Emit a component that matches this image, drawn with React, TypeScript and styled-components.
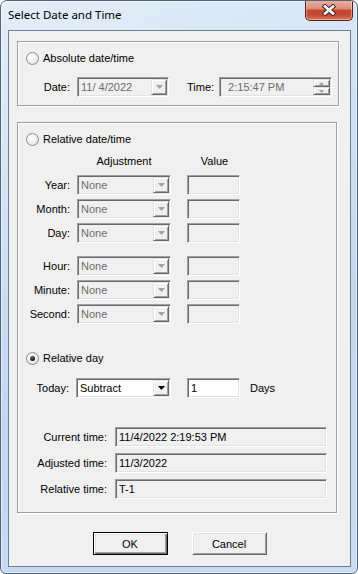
import React from 'react';
import styled, { createGlobalStyle, css } from 'styled-components';

const GlobalStyle = createGlobalStyle`
  html, body {
    margin: 0;
    padding: 0;
    background: #ffffff;
  }
  body {
    font-family: "Liberation Sans", Arial, sans-serif;
    font-size: 11px;
    color: #000000;
  }
  * {
    box-sizing: border-box;
  }
`;

const sunken = css`
  border: 1px solid;
  border-color: #a0a0a0 #ffffff #ffffff #a0a0a0;
  box-shadow: inset 1px 1px 0 #696969, inset -1px -1px 0 #e3e3e3;
  padding: 1px;
`;

const raised = css`
  border: 1px solid;
  border-color: #e3e3e3 #696969 #696969 #e3e3e3;
  box-shadow: inset 1px 1px 0 #ffffff, inset -1px -1px 0 #a0a0a0;
  background: #f0f0f0;
`;

const Window = styled.div`
  width: 358px;
  height: 574px;
  display: flex;
  flex-direction: column;
  border: 1px solid #52647a;
  border-radius: 7px 7px 6px 6px;
  background: linear-gradient(160deg, #e4eef9 0%, #cfe0f3 35%, #c2d7ee 60%, #c9dcf1 100%);
  box-shadow: inset 0 0 0 1px rgba(255, 255, 255, 0.55);
  overflow: hidden;
`;

const TitleBar = styled.div`
  height: 29px;
  display: flex;
  align-items: flex-start;
  padding-left: 7px;
`;

const Title = styled.div`
  font-family: "Noto Sans", "Liberation Sans", sans-serif;
  font-size: 11.5px;
  line-height: 28px;
  color: #000000;
`;

const CloseButton = styled.div`
  margin-left: auto;
  margin-right: 4px;
  margin-top: -1px;
  width: 48px;
  height: 21px;
  display: flex;
  align-items: center;
  justify-content: center;
  border: 1px solid #5a2219;
  border-top: none;
  border-radius: 0 0 5px 5px;
  background: linear-gradient(
    to bottom,
    #eab2a4 0%,
    #dc8c77 45%,
    #c4472f 50%,
    #c24a33 75%,
    #dd7a5e 100%
  );
  box-shadow: inset 0 0 0 1px rgba(255, 255, 255, 0.35);
`;

const Client = styled.div`
  flex: 1;
  margin: 0 6px 6px 7px;
  border: 1px solid #6f7f92;
  background: #f0f0f0;
  display: flex;
  flex-direction: column;
  padding: 10px 0 0 8px;
`;

const Group = styled.div<{ $width: number; $height: number; $gap?: number }>`
  width: ${p => p.$width}px;
  height: ${p => p.$height}px;
  margin-top: ${p => p.$gap ?? 0}px;
  border: 1px solid #a0a0a0;
  box-shadow: inset 1px 1px 0 #ffffff, 1px 1px 0 #ffffff;
  padding-top: 10px;
  display: flex;
  flex-direction: column;
`;

const RadioRow = styled.div<{ $gap?: number }>`
  display: flex;
  align-items: center;
  height: 13px;
  padding-left: 8px;
  margin-top: ${p => p.$gap ?? 0}px;
`;

const RadioCircle = styled.div<{ $checked?: boolean }>`
  width: 13px;
  height: 13px;
  border-radius: 50%;
  border: 1px solid #8b8b8b;
  background: radial-gradient(circle at 40% 35%, #ffffff 0%, #f2f2f2 45%, #d4d4d4 100%);
  display: flex;
  align-items: center;
  justify-content: center;
  &::after {
    content: '';
    display: ${p => (p.$checked ? 'block' : 'none')};
    width: 5px;
    height: 5px;
    border-radius: 50%;
    background: radial-gradient(circle at 40% 35%, #6a6a6a 0%, #111111 70%);
  }
`;

const RadioText = styled.span`
  margin-left: 4px;
  line-height: 13px;
`;

const Row = styled.div<{ $gap?: number }>`
  display: flex;
  align-items: center;
  height: 20px;
  margin-top: ${p => p.$gap ?? 0}px;
`;

const Label = styled.div<{ $width: number }>`
  width: ${p => p.$width}px;
  text-align: right;
  margin-right: 7px;
  white-space: nowrap;
`;

const InlineLabel = styled.div<{ $left: number; $right?: number }>`
  margin-left: ${p => p.$left}px;
  margin-right: ${p => p.$right ?? 0}px;
  white-space: nowrap;
`;

const Combo = styled.div<{ $width: number; $enabled?: boolean }>`
  ${sunken};
  width: ${p => p.$width}px;
  height: 20px;
  display: flex;
  align-items: center;
  background: ${p => (p.$enabled ? '#ffffff' : '#f0f0f0')};
  color: ${p => (p.$enabled ? '#000000' : '#6d6d6d')};
`;

const ComboText = styled.div`
  flex: 1;
  padding-left: 2px;
  white-space: nowrap;
`;

const DropButton = styled.div`
  ${raised};
  width: 16px;
  height: 16px;
  display: flex;
  align-items: center;
  justify-content: center;
`;

const SpinStack = styled.div`
  display: flex;
  flex-direction: column;
  width: 17px;
  height: 16px;
`;

const SpinButton = styled.div`
  ${raised};
  flex: 1;
  display: flex;
  align-items: center;
  justify-content: center;
`;

const Field = styled.div<{ $width: number; $enabled?: boolean; $left?: number }>`
  ${sunken};
  width: ${p => p.$width}px;
  height: 20px;
  margin-left: ${p => p.$left ?? 0}px;
  display: flex;
  align-items: center;
  padding-left: 3px;
  background: ${p => (p.$enabled ? '#ffffff' : '#f0f0f0')};
  white-space: nowrap;
`;

const HeaderRow = styled.div`
  display: flex;
  height: 13px;
  line-height: 13px;
  margin-top: 9px;
`;

const HeaderCell = styled.div<{ $left: number; $width: number }>`
  margin-left: ${p => p.$left}px;
  width: ${p => p.$width}px;
  text-align: center;
`;

const ButtonBar = styled.div`
  display: flex;
  justify-content: center;
  gap: 24px;
  margin-top: 19px;
  margin-left: -8px;
`;

const PushButton = styled.div<{ $default?: boolean }>`
  width: 75px;
  height: 23px;
  display: flex;
  align-items: center;
  justify-content: center;
  background: #f0f0f0;
  ${p =>
    p.$default
      ? css`
          border: 1px solid #000000;
          box-shadow: inset 1px 1px 0 #ffffff, inset -1px -1px 0 #696969,
            inset -2px -2px 0 #a0a0a0, inset 2px 2px 0 #e3e3e3;
        `
      : css`
          border: 1px solid;
          border-color: #ffffff #696969 #696969 #ffffff;
          box-shadow: inset 1px 1px 0 #e3e3e3, inset -1px -1px 0 #a0a0a0;
        `}
`;

const Arrow: React.FC<{ enabled?: boolean }> = ({ enabled }) => (
  <svg width="7" height="4" viewBox="0 0 7 4">
    <polygon points="0,0 7,0 3.5,4" fill={enabled ? '#000000' : '#a0a0a0'} />
  </svg>
);

const SpinArrow: React.FC<{ up?: boolean }> = ({ up }) => (
  <svg width="5" height="3" viewBox="0 0 5 3">
    <polygon points={up ? '0,3 5,3 2.5,0' : '0,0 5,0 2.5,3'} fill="#a0a0a0" />
  </svg>
);

const CloseGlyph: React.FC = () => (
  <svg width="14" height="12" viewBox="0 0 14 12">
    <path d="M3 2.5 L11 9.5 M11 2.5 L3 9.5" stroke="#4a2a26" strokeWidth="4.6" strokeLinecap="square" />
    <path d="M3 2.5 L11 9.5 M11 2.5 L3 9.5" stroke="#ffffff" strokeWidth="2.6" strokeLinecap="square" />
  </svg>
);

const adjustments = [
  { name: 'Year:', gap: 7 },
  { name: 'Month:', gap: 4 },
  { name: 'Day:', gap: 4 },
  { name: 'Hour:', gap: 13 },
  { name: 'Minute:', gap: 4 },
  { name: 'Second:', gap: 4 },
];

const info = [
  { name: 'Current time:', value: '11/4/2022 2:19:53 PM', gap: 29 },
  { name: 'Adjusted time:', value: '11/3/2022', gap: 6 },
  { name: 'Relative time:', value: 'T-1', gap: 6 },
];

const App: React.FC = () => {
  return (
    <>
      <GlobalStyle />
      <Window>
        <TitleBar>
          <Title>Select Date and Time</Title>
          <CloseButton>
            <CloseGlyph />
          </CloseButton>
        </TitleBar>
        <Client>
          <Group $width={322} $height={65}>
            <RadioRow>
              <RadioCircle />
              <RadioText>Absolute date/time</RadioText>
            </RadioRow>
            <Row $gap={12}>
              <Label $width={52}>Date:</Label>
              <Combo $width={92}>
                <ComboText>11/ 4/2022</ComboText>
                <DropButton>
                  <Arrow />
                </DropButton>
              </Combo>
              <InlineLabel $left={18} $right={5}>
                Time:
              </InlineLabel>
              <Combo $width={113}>
                <ComboText style={{ paddingLeft: 7 }}>2:15:47 PM</ComboText>
                <SpinStack>
                  <SpinButton>
                    <SpinArrow up />
                  </SpinButton>
                  <SpinButton>
                    <SpinArrow />
                  </SpinButton>
                </SpinStack>
              </Combo>
            </Row>
          </Group>

          <Group $width={320} $height={391} $gap={16}>
            <RadioRow>
              <RadioCircle />
              <RadioText>Relative date/time</RadioText>
            </RadioRow>
            <HeaderRow>
              <HeaderCell $left={59} $width={94}>
                Adjustment
              </HeaderCell>
              <HeaderCell $left={17} $width={53}>
                Value
              </HeaderCell>
            </HeaderRow>
            {adjustments.map(a => (
              <Row key={a.name} $gap={a.gap}>
                <Label $width={52}>{a.name}</Label>
                <Combo $width={94}>
                  <ComboText>None</ComboText>
                  <DropButton>
                    <Arrow />
                  </DropButton>
                </Combo>
                <Field $width={53} $left={16} />
              </Row>
            ))}

            <RadioRow $gap={28}>
              <RadioCircle $checked />
              <RadioText>Relative day</RadioText>
            </RadioRow>
            <Row $gap={13}>
              <Label $width={51}>Today:</Label>
              <Combo $width={95} $enabled>
                <ComboText>Subtract</ComboText>
                <DropButton>
                  <Arrow enabled />
                </DropButton>
              </Combo>
              <Field $width={53} $left={16} $enabled>
                1
              </Field>
              <InlineLabel $left={10}>Days</InlineLabel>
            </Row>

            {info.map(i => (
              <Row key={i.name} $gap={i.gap}>
                <Label $width={89} style={{ marginRight: 8 }}>
                  {i.name}
                </Label>
                <Field $width={212}>{i.value}</Field>
              </Row>
            ))}
          </Group>

          <ButtonBar>
            <PushButton $default>OK</PushButton>
            <PushButton>Cancel</PushButton>
          </ButtonBar>
        </Client>
      </Window>
    </>
  );
};

export default App;
